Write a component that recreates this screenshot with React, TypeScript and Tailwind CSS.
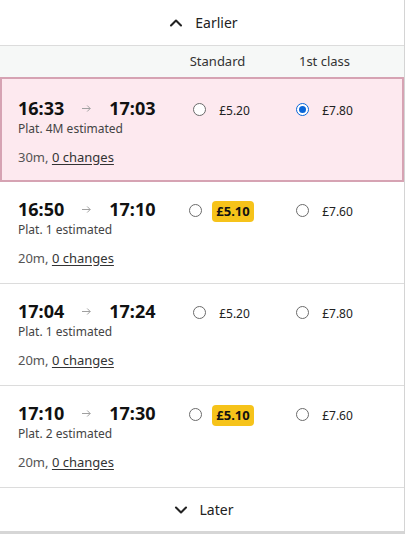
import { ChevronUp, ChevronDown } from "lucide-react"

type Journey = {
  dep: string
  arr: string
  plat: string
  dur: string
  std: string
  first: string
  cheapest?: boolean
  selected?: boolean
}

const journeys: Journey[] = [
  { dep: "16:33", arr: "17:03", plat: "Plat. 4M estimated", dur: "30m", std: "£5.20", first: "£7.80", selected: true },
  { dep: "16:50", arr: "17:10", plat: "Plat. 1 estimated", dur: "20m", std: "£5.10", first: "£7.60", cheapest: true },
  { dep: "17:04", arr: "17:24", plat: "Plat. 1 estimated", dur: "20m", std: "£5.20", first: "£7.80" },
  { dep: "17:10", arr: "17:30", plat: "Plat. 2 estimated", dur: "20m", std: "£5.10", first: "£7.60", cheapest: true },
]

function Radio({ checked }: { checked?: boolean }) {
  if (checked) {
    return (
      <div className="w-[13px] h-[13px] rounded-full border border-[#0a66d8] bg-white flex items-center justify-center shrink-0">
        <div className="w-[7px] h-[7px] rounded-full bg-[#0a66d8]" />
      </div>
    )
  }
  return <div className="w-[13px] h-[13px] rounded-full border border-[#6b6b6b] bg-white shrink-0" />
}

function Arrow() {
  return (
    <svg width="9" height="7" viewBox="0 0 9 7" fill="none" stroke="#a0a0a0" strokeWidth="1">
      <path d="M0 3.5H8.2M5.2 0.5L8.2 3.5L5.2 6.5" />
    </svg>
  )
}

function Row({ j }: { j: Journey }) {
  return (
    <div
      className={
        j.selected
          ? "flex h-[105px] border-2 border-[#d6a3b3] bg-[#fde9ef] pl-[16px] pt-[17px]"
          : "flex h-[102px] border-b border-[#dcdcdc] bg-white pl-[18px] pt-[15px]"
      }
    >
      <div className="w-[152px] flex flex-col">
        <div className="flex items-center h-[24px] text-[18px] font-bold text-[#111]">
          <span>{j.dep}</span>
          <span className="w-[45px] flex justify-center pt-[1px]">
            <Arrow />
          </span>
          <span>{j.arr}</span>
        </div>
        <div className="text-[12px] text-[#444] leading-[18px]">{j.plat}</div>
        <div className="mt-[10px] text-[13px] text-[#555] leading-[18px]">
          {j.dur}, <span className="underline text-[#333] underline-offset-2">0 changes</span>
        </div>
      </div>
      <div className="w-[103px] flex items-start justify-center">
        <div className="flex items-center h-[24px] gap-[10px] pt-[2px]">
          <Radio />
          {j.cheapest ? (
            <span className="bg-[#f6c31a] rounded-[4px] px-[4px] h-[21px] flex items-center text-[13px] font-bold text-[#111] mt-[3px]">
              {j.std}
            </span>
          ) : (
            <span className="text-[12px] text-[#222] ml-[3px] mt-[3px]">{j.std}</span>
          )}
        </div>
      </div>
      <div className="w-[103px] flex items-start justify-center">
        <div className="flex items-center h-[24px] gap-[13px] pt-[2px]">
          <Radio checked={j.selected} />
          <span className="text-[12px] text-[#222] mt-[3px]">{j.first}</span>
        </div>
      </div>
    </div>
  )
}

export default function App() {
  return (
    <div className="w-[407px] h-[534px] bg-white" style={{ fontFamily: '"Noto Sans", "Open Sans", sans-serif' }}>
      <div className="w-[405px] h-[534px] border-r border-[#d4d4d4] flex flex-col">
        <div className="h-[46px] border-b border-[#dcdcdc] flex items-center justify-center gap-[9px] text-[14px] text-[#222]">
          <ChevronUp size={20} strokeWidth={2.5} />
          <span>Earlier</span>
        </div>
        <div className="h-[31px] bg-[#f6f8f7] flex items-center text-[13px] text-[#333]">
          <div className="w-[170px]" />
          <div className="w-[103px] text-center pr-[8px]">Standard</div>
          <div className="w-[103px] text-center">1st class</div>
        </div>
        {journeys.map((j) => (
          <Row key={j.dep} j={j} />
        ))}
        <div className="flex-1 flex items-center justify-center gap-[9px] text-[14px] text-[#222]">
          <ChevronDown size={20} strokeWidth={2.5} />
          <span>Later</span>
        </div>
        <div className="h-[3px] bg-[#d6d6d6]" />
      </div>
    </div>
  )
}
